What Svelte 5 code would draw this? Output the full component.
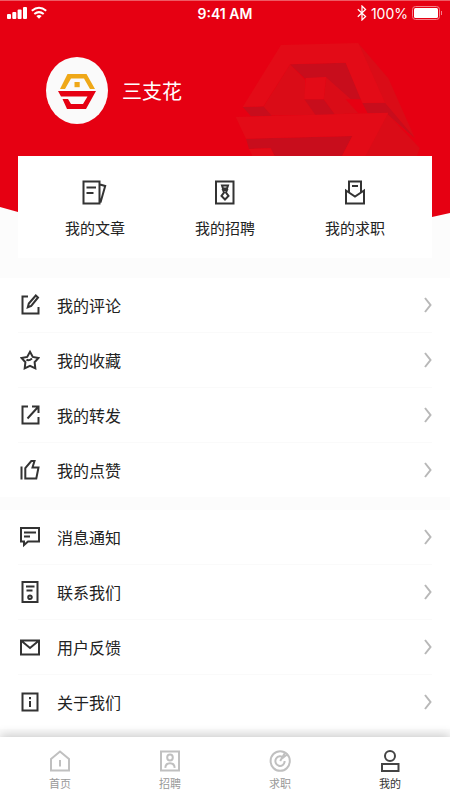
<script lang="ts">
	type Item = { label: string; icon: string };

	const shortcuts: Item[] = [
		{ label: '我的文章', icon: 'article' },
		{ label: '我的招聘', icon: 'job' },
		{ label: '我的求职', icon: 'resume' }
	];

	const groups: Item[][] = [
		[
			{ label: '我的评论', icon: 'comment' },
			{ label: '我的收藏', icon: 'star' },
			{ label: '我的转发', icon: 'share' },
			{ label: '我的点赞', icon: 'like' }
		],
		[
			{ label: '消息通知', icon: 'message' },
			{ label: '联系我们', icon: 'contact' },
			{ label: '用户反馈', icon: 'mail' },
			{ label: '关于我们', icon: 'about' }
		]
	];

	const tabs: Item[] = [
		{ label: '首页', icon: 'home' },
		{ label: '招聘', icon: 'recruit' },
		{ label: '求职', icon: 'target' },
		{ label: '我的', icon: 'me' }
	];

	// 26x26 for shortcuts, 20x22 for list rows, 22x22 for tabs
	const paths: Record<string, string> = {
		article: 'M1.5 1.5H17.5V23.5H1.5ZM4.5 7.5H14M4.5 13H11.5M18 4.5L23.2 6L18.5 22.5',
		job: 'M4 1.5H21.5V23.5H4ZM10 5.5H16L15 8.5H11ZM11 10L12 12.5L9.5 16L13 19.5L16.5 16L14 12.5L15 10Z',
		resume: 'M4 10.5V23.5H22V10.5L13 16.5ZM7 12V1.5H19V12M10 6H16',
		comment: 'M8 2.5H2.5V19.5H18.5V13M7.8 13.2L8.8 9.5L15.8 1.5L18 3.5L11.2 11.8Z',
		star: 'M10 2.8L12.8 7.9L18.5 9L14.6 13.2L15.3 19.4L10 16.8L4.7 19.4L5.4 13.2L1.5 9L7.2 7.9ZM6.5 10.5Q8.5 12.5 12 9.5',
		share: 'M8 2.5H2.5V19.5H18.5V13M7.5 14.5L18 3M12 2.5H18.5V9',
		like: 'M1.5 7.5V20.5M5.3 19.5V9L11.3 2H14.5L12.5 8.5H18.5L16.3 19.5Z',
		message: 'M1 2H19V15.5H8L4 19V15.5H1ZM4 6.5H16M4 10.5H10',
		contact: 'M2.5 1H17.5V21H2.5ZM6 5.5H14.5M6.5 9.5H12.5M11.8 16.2A1.8 1.8 0 1 1 8.2 16.2A1.8 1.8 0 1 1 11.8 16.2',
		mail: 'M1 4.5H19V18.5H1ZM1 4.5L10 12L19 4.5',
		about: 'M2.5 2.5H17.5V19.5H2.5ZM10 6V8.2M10 10V16',
		home: 'M2 9L11 1.5L20 9V20.5H2ZM11 10V16.5',
		recruit: 'M2 1.5H20V20.5H2ZM13.8 7.5A2.8 3 0 1 1 8.2 7.5A2.8 3 0 1 1 13.8 7.5M6.3 17.8C6.8 11.8 15.2 11.8 15.7 17.8',
		target: 'M20.8 11A9.6 9.8 0 1 1 1.6 11A9.6 9.8 0 1 1 20.8 11M14.5 8A4.6 4.8 0 1 0 15.6 11M11.2 11L16 2.7M13 8.5L18 4.5',
		me: 'M16 6A5 5 0 1 1 6 6A5 5 0 1 1 16 6M3 14H19.5V21H3Z'
	};
</script>

<svelte:head>
	<title>我的</title>
</svelte:head>

{#snippet icon(name: string, w: number, h: number)}
	<svg class="icon" width={w} height={h} viewBox="0 0 {w} {h}" aria-hidden="true">
		<path d={paths[name]} />
	</svg>
{/snippet}

<div class="page">
	<header class="header">
		<div class="backdrop">
			<svg class="watermark" width="225" height="160" viewBox="0 0 675 480" aria-hidden="true">
				<path fill="#da0c17" d="M400 130L490 235L570 415L480 340L410 305Z" />
				<path fill="#da0c17" d="M195 193L240 240L240 298L300 345L80 347L115 320Z" />
				<path fill="#c80d1c" d="M195 193L362 188L412 300L362 298L303 232L240 236Z" />
				<path fill="#da0c17" d="M303 232L425 340L328 343L296 298Z" />
				<path fill="#e60012" d="M362 298L412 298L430 340L400 340Z" />
				<path fill="#c80d1c" d="M238 298L296 298L330 344L272 346Z" />
				<path fill="#e30b17" d="M242 234L303 231L296 298L238 298Z" />
				<path fill="#c80d1c" d="M53 321L115 319L140 347L78 349Z" />
				<path fill="#c80d1c" d="M412 309L480 308L570 415L484 340L428 340Z" />
				<path fill="#e30b17" d="M168 135L400 129L480 308L412 309L362 188L195 193L115 319L53 321Z" />
				<path fill="#da0c17" d="M484 338L584 444L572 480H390Z" />
				<path fill="#c80d1c" d="M63 416L382 408L345 480H155L137 445L72 447Z" />
				<path fill="#e30b17" d="M32 351L490 338L415 480H345L382 408L63 416Z" />
				<path fill="#e30b17" d="M72 447L137 445L155 480H88Z" />
			</svg>
		</div>

		<div class="status">
			<div class="status-left">
				<svg width="40" height="14" viewBox="0 0 40 14" fill="#fff" aria-hidden="true">
					<rect x="0" y="8" width="4" height="5" rx="1" />
					<rect x="5.3" y="6" width="4" height="7" rx="1" />
					<rect x="10.6" y="3.5" width="4" height="9.5" rx="1" />
					<rect x="16" y="1" width="4" height="12" rx="1" />
					<path
						d="M24.8 4.8Q32 -1.2 39.2 4.8M27.3 8Q32 4.2 36.7 8"
						fill="none"
						stroke="#fff"
						stroke-width="2"
					/>
					<path d="M29.3 10Q32 8 34.7 10L32 12.8Z" />
				</svg>
			</div>
			<span class="time">9:41 AM</span>
			<div class="status-right">
				<svg width="10" height="16" viewBox="0 0 10 16" aria-hidden="true">
					<path
						d="M0.8 4.2L8.6 11.5L5 15V1L8.6 4.5L0.8 11.8"
						fill="none"
						stroke="#fff"
						stroke-width="1.2"
					/>
				</svg>
				<span>100%</span>
				<svg width="31" height="14" viewBox="0 0 31 14" aria-hidden="true">
					<rect x="0.5" y="0.5" width="27" height="13" rx="3" fill="none" stroke="#f5808a" />
					<rect x="2" y="2" width="24" height="10" rx="1.5" fill="#fff" />
					<path d="M29.5 5V9" stroke="#f5808a" />
				</svg>
			</div>
		</div>

		<div class="profile">
			<div class="avatar">
				<svg width="62" height="67" viewBox="6 7 62 67" aria-hidden="true">
					<path fill="#efa818" d="M27.5 24H46.5L55 39H50L44 28.6H31L25 39H20Z" />
					<rect fill="#efa818" x="34.5" y="32" width="5.2" height="5.2" />
					<path
						fill="#e60012"
						d="M18 41H56L46 59H27L22.5 49H28L31 54H43L47.5 46.5H21Z"
					/>
				</svg>
			</div>
			<h1>三支花</h1>
		</div>

		<nav class="card">
			{#each shortcuts as item}
				<a href="#{item.icon}">
					{@render icon(item.icon, 26, 26)}
					<span>{item.label}</span>
				</a>
			{/each}
		</nav>
	</header>

	<main>
		{#each groups as group}
			<ul class="group">
				{#each group as item}
					<li>
						<a href="#{item.icon}">
							{@render icon(item.icon, 20, 22)}
							<span>{item.label}</span>
							<svg class="arrow" width="8" height="16" viewBox="0 0 8 16" aria-hidden="true">
								<path d="M1 1L6.5 8L1 15" />
							</svg>
						</a>
					</li>
				{/each}
			</ul>
		{/each}
	</main>

	<nav class="tabbar">
		{#each tabs as tab}
			<a href="#{tab.icon}" class:active={tab.icon === 'me'}>
				{@render icon(tab.icon, 22, 22)}
				<span>{tab.label}</span>
			</a>
		{/each}
	</nav>
</div>

<style>
	:global(body) {
		background: #fcfcfc;
	}

	.page {
		display: flex;
		flex-direction: column;
		min-height: 100vh;
		color: #222;
		font-family: 'Noto Sans CJK SC', sans-serif;
	}

	a {
		color: inherit;
		text-decoration: none;
	}

	svg {
		display: block;
		flex: none;
	}

	.icon {
		fill: none;
		stroke: #333;
		stroke-width: 2;
	}

	.header {
		position: relative;
	}

	.backdrop {
		position: absolute;
		inset: 0 0 40px;
		box-sizing: border-box;
		background: #e60012;
		border-top: 1px solid #ee5a64;
		clip-path: polygon(0 0, 100% 0, 100% 213px, 96% 217px, 50% 224px, 4% 212px, 0 207px);
	}

	.watermark {
		position: absolute;
		top: -1px;
		right: 0;
	}

	.status {
		position: relative;
		display: grid;
		grid-template-columns: 1fr auto 1fr;
		align-items: center;
		height: 26px;
		padding: 0 7px;
		color: #fff;
		font-family: Inter, sans-serif;
		font-size: 14px;
	}

	.time {
		font-weight: 600;
	}

	.status-right {
		display: flex;
		align-items: center;
		justify-content: flex-end;
		gap: 4px;
	}

	.profile {
		position: relative;
		display: flex;
		align-items: center;
		gap: 14px;
		padding: 31px 46px 32px;
	}

	.avatar {
		border-radius: 50%;
		background: #fafafa;
	}

	h1 {
		margin: 0;
		color: #fff;
		font-size: 20px;
		font-weight: 400;
		line-height: 30px;
	}

	.card {
		position: relative;
		display: flex;
		margin: 0 18px;
		padding: 24px 12px 18px;
		background: #fff;
	}

	.card a {
		display: flex;
		flex: 1;
		flex-direction: column;
		align-items: center;
		gap: 10px;
		font-size: 15px;
		line-height: 24px;
	}

	main {
		display: flex;
		flex-direction: column;
		gap: 13px;
		padding: 20px 0 8px;
	}

	.group {
		margin: 0;
		padding: 0 18px;
		background: #fff;
		list-style: none;
	}

	.group li + li {
		border-top: 1px solid #fafafa;
	}

	.group a {
		display: flex;
		align-items: center;
		gap: 17px;
		height: 54px;
		padding-left: 2px;
		font-size: 16px;
	}

	.arrow {
		margin-left: auto;
		fill: none;
		stroke: #b8b8b8;
		stroke-width: 2;
	}

	.tabbar {
		position: sticky;
		bottom: 0;
		display: flex;
		margin-top: auto;
		padding: 13px 5px 9px;
		background: #fff;
		box-shadow: 0 -2px 10px rgba(0, 0, 0, 0.2);
	}

	.tabbar a {
		display: flex;
		flex: 1;
		flex-direction: column;
		align-items: center;
		gap: 3px;
		color: #999;
		font-size: 11px;
		line-height: 16px;
	}

	.tabbar .icon {
		stroke: #c0c0c0;
	}

	.tabbar .active {
		color: #333;
	}

	.tabbar .active .icon {
		stroke: #444;
	}
</style>
